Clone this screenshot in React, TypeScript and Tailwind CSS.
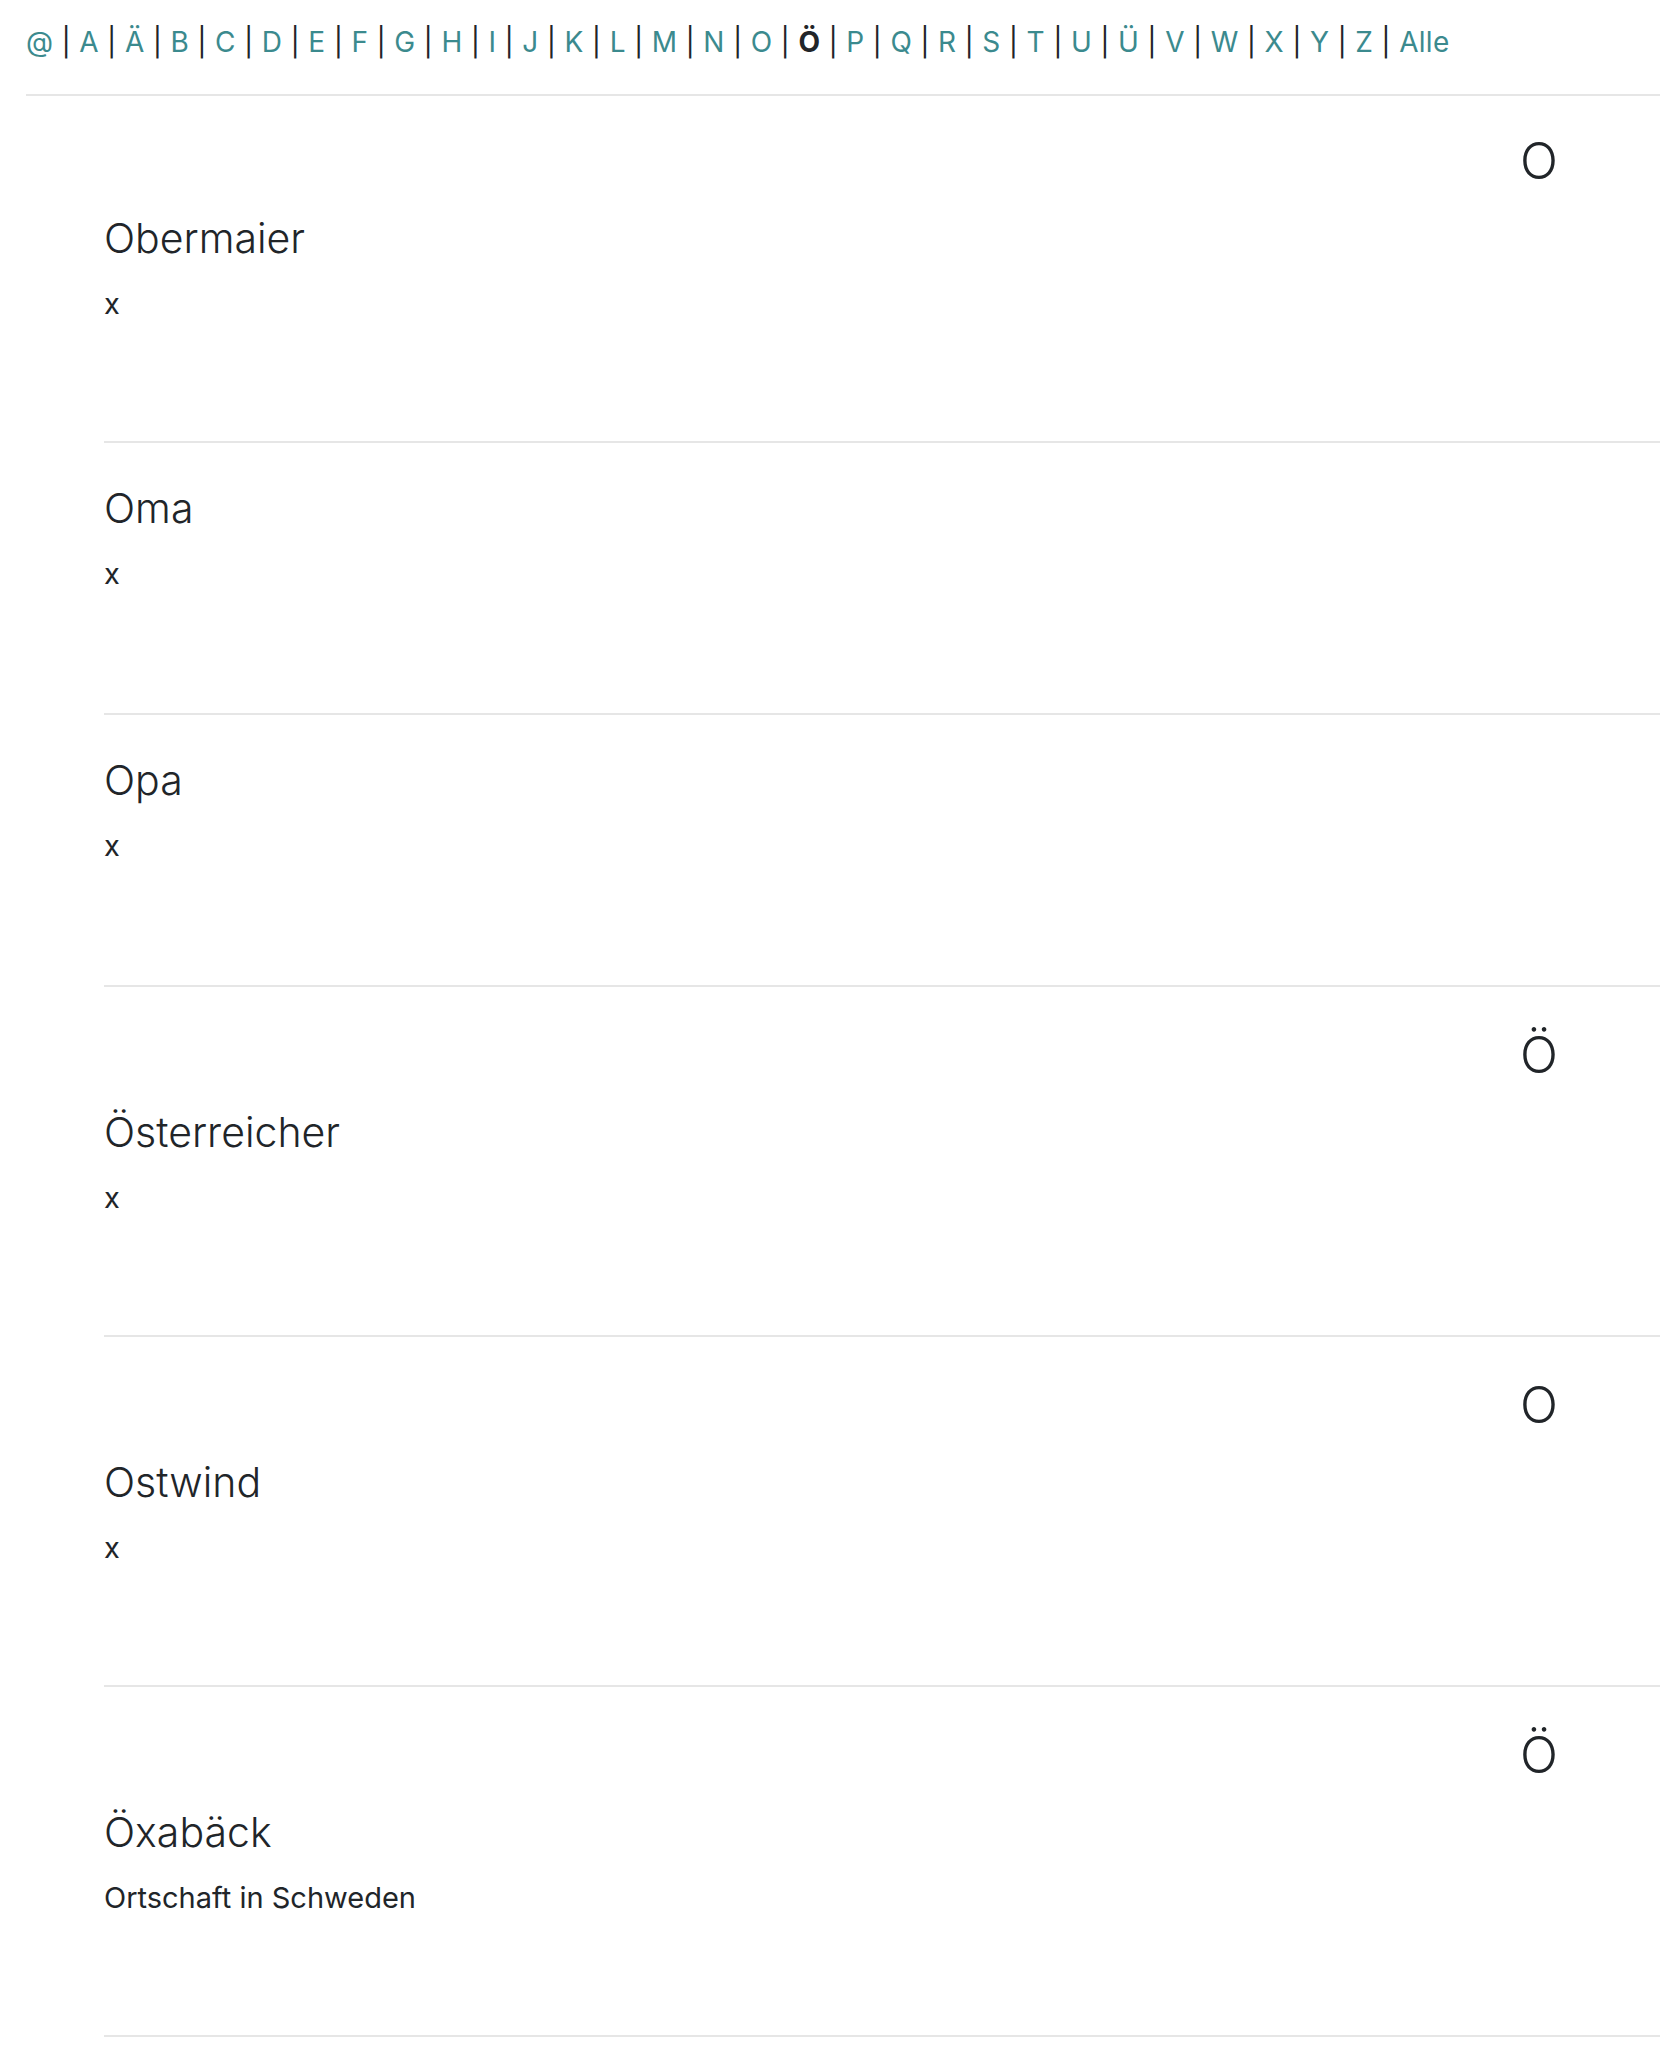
import { Fragment } from 'react';

const letters = [
  '@', 'A', 'Ä', 'B', 'C', 'D', 'E', 'F', 'G', 'H', 'I', 'J', 'K', 'L', 'M', 'N',
  'O', 'Ö', 'P', 'Q', 'R', 'S', 'T', 'U', 'Ü', 'V', 'W', 'X', 'Y', 'Z', 'Alle',
];

const active = 'Ö';

type Entry = {
  letter?: string;
  title: string;
  description: string;
};

const entries: Entry[] = [
  { letter: 'O', title: 'Obermaier', description: 'x' },
  { title: 'Oma', description: 'x' },
  { title: 'Opa', description: 'x' },
  { letter: 'Ö', title: 'Österreicher', description: 'x' },
  { letter: 'O', title: 'Ostwind', description: 'x' },
  { letter: 'Ö', title: 'Öxabäck', description: 'Ortschaft in Schweden' },
];

function AlphabetNav() {
  return (
    <nav className="ml-[26px] border-b-2 border-[#e6e6e6] pt-[21px] pb-[31px]">
      <p className="text-[28px] leading-[42px] tracking-[0.3px] whitespace-nowrap text-[#212529]">
        {letters.map((l, i) => (
          <Fragment key={l}>
            {i > 0 && <span className="text-[#212529]"> | </span>}
            {l === active ? (
              <span className="font-bold text-[#212529]">{l}</span>
            ) : (
              <a href="#" className="text-[#3b8a8e]">
                {l}
              </a>
            )}
          </Fragment>
        ))}
      </p>
    </nav>
  );
}

function EntryRow({ entry, first }: { entry: Entry; first: boolean }) {
  const height = entry.letter ? (first ? 'h-[347px]' : 'h-[350px]') : 'h-[272px]';

  return (
    <div
      className={`${height} border-b-2 border-[#e6e6e6] ${
        entry.letter ? (first ? 'pt-[35px]' : 'pt-[38px]') : 'pt-[40px]'
      }`}
    >
      {entry.letter && (
        <div className="mb-[22px] flex justify-end pr-[102px]">
          <span className="text-[50px] leading-[60px] font-light text-[#212529]">
            {entry.letter}
          </span>
        </div>
      )}
      <h2 className="text-[41px] leading-[50px] font-light text-[#212529]">{entry.title}</h2>
      <p className="mt-[23px] text-[29px] leading-[36px] text-[#212529]">{entry.description}</p>
    </div>
  );
}

export default function App() {
  return (
    <div className="min-h-[2064px] bg-white font-['Inter',sans-serif]">
      <AlphabetNav />
      <div className="pl-[104px]">
        {entries.map((e, i) => (
          <EntryRow key={e.title} entry={e} first={i === 0} />
        ))}
      </div>
    </div>
  );
}
